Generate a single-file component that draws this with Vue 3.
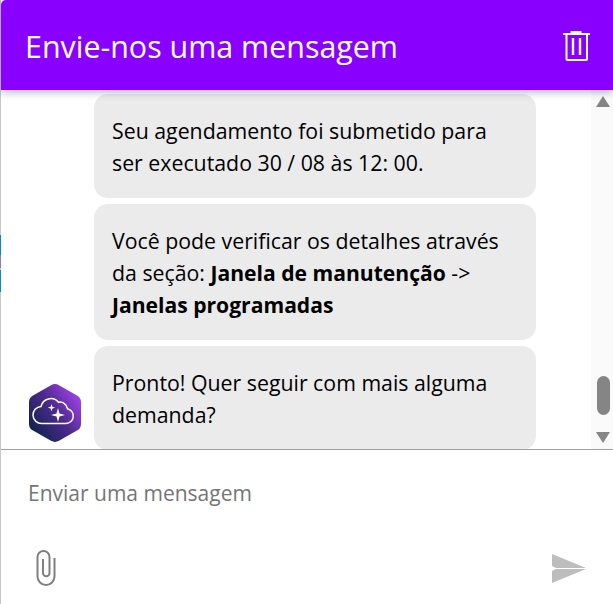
<script setup>
const messages = [
  { id: 1, parts: [{ t: 'Seu agendamento foi submetido para ser executado 30 / 08 às 12: 00.' }] },
  {
    id: 2,
    parts: [
      { t: 'Você pode verificar os detalhes através da seção: ' },
      { t: 'Janela de manutenção', b: true },
      { t: ' -> ' },
      { t: 'Janelas programadas', b: true }
    ]
  },
  { id: 3, parts: [{ t: 'Pronto! Quer seguir com mais alguma demanda?' }], avatar: true }
]
</script>

<template>
  <div class="page">
    <div class="edge"></div>
    <div class="chat">
      <header class="head">
        <h1>Envie-nos uma mensagem</h1>
        <button class="icon-btn trash" aria-label="Limpar">
          <svg width="28" height="30" viewBox="0 0 28 30" fill="none" stroke="#fff" stroke-width="2">
            <path d="M1 3h27M9.5 3V1h9v2" />
            <path d="M4.5 3v25a1 1 0 0 0 1 1h18.5a1 1 0 0 0 1-1V3" />
            <path d="M11 7v17M18 7v17" stroke-width="2.4" />
          </svg>
        </button>
      </header>

      <div class="body">
        <div class="list">
          <div v-for="m in messages" :key="m.id" class="row">
            <div class="avatar-slot">
              <svg v-if="m.avatar" width="52" height="58" viewBox="0 0 52 58">
                <defs>
                  <linearGradient id="hex" x1="0.05" y1="0.9" x2="0.95" y2="0.2">
                    <stop offset="0" stop-color="#0c2148" />
                    <stop offset="0.55" stop-color="#4c2a8c" />
                    <stop offset="1" stop-color="#a040e8" />
                  </linearGradient>
                </defs>
                <path
                  d="M22 1.2a8 8 0 0 1 8 0l18 10.2a7.5 7.5 0 0 1 4 6.6v22a7.5 7.5 0 0 1-4 6.6L30 56.8a8 8 0 0 1-8 0L4 46.6A7.5 7.5 0 0 1 0 40V18a7.5 7.5 0 0 1 4-6.6z"
                  fill="url(#hex)"
                />
                <path
                  d="M13 39.5H37a7.5 7.5 0 0 0 1.5-14.8a7.5 7.5 0 0 0-9-6.4a10 10 0 0 0-17.5 4.2a8.5 8.5 0 0 0 1 17z"
                  fill="none"
                  stroke="#fff"
                  stroke-width="1.5"
                />
                <path d="M29 24l1.5 5.5 5.5 1.5-5.5 1.5-1.5 5.5-1.5-5.5-5.5-1.5 5.5-1.5z" fill="#fff" />
                <path d="M22.5 20l.9 2.8 2.8.9-2.8.9-.9 2.8-.9-2.8-2.8-.9 2.8-.9z" fill="#fff" />
              </svg>
            </div>
            <div class="bubble">
              <template v-for="(p, i) in m.parts" :key="i">
                <b v-if="p.b">{{ p.t }}</b>
                <template v-else>{{ p.t }}</template>
              </template>
            </div>
          </div>
        </div>
        <div class="scrollbar">
          <span class="arrow up"></span>
          <span class="thumb"></span>
          <span class="arrow down"></span>
        </div>
      </div>

      <footer class="composer">
        <input class="field" type="text" placeholder="Enviar uma mensagem" />
        <div class="actions">
          <button class="icon-btn" aria-label="Anexar">
            <svg width="20" height="36" viewBox="0 0 20 36" fill="none" stroke="#808080" stroke-width="2">
              <path d="M18.5 8V26.5a8.5 8.5 0 0 1-17 0V7a6 6 0 0 1 12 0V23a3.25 3.25 0 0 1-6.5 0V9" />
            </svg>
          </button>
          <button class="icon-btn" aria-label="Enviar">
            <svg width="34" height="29" viewBox="0 0 34 29">
              <path d="M0 0l34 14H4L0 12zM0 29l34-14H4L0 17z" fill="#bdbdbd" />
            </svg>
          </button>
        </div>
      </footer>
    </div>
  </div>
</template>

<style>
html,
body {
  background: #fff;
}
</style>

<style scoped>
.page {
  display: flex;
  width: 613px;
  height: 604px;
  overflow: hidden;
  font-family: "Open Sans", "Noto Sans", sans-serif;
  color: #000;
}

.edge {
  flex: 0 0 1px;
  background: linear-gradient(
    #c8c8c8 235px,
    #0a84d0 235px,
    #0a84d0 255px,
    #8a7cc0 255px,
    #8a7cc0 268px,
    #c8c8c8 268px,
    #c8c8c8 270px,
    #0a84d0 270px,
    #0a84d0 292px,
    #c8c8c8 292px
  );
}

.chat {
  flex: 1;
  display: flex;
  flex-direction: column;
  min-width: 0;
}

.head {
  position: relative;
  z-index: 1;
  flex: 0 0 90px;
  display: flex;
  align-items: center;
  justify-content: space-between;
  padding: 0 23px 0 24px;
  background: #8a00ff;
  border-top-left-radius: 5px;
  box-shadow: 0 2px 8px rgba(0, 0, 0, 0.3);
}

.head h1 {
  margin: 2px 0 0;
  font-size: 30.4px;
  font-weight: 400;
  color: #fff;
}

.icon-btn {
  display: flex;
  padding: 0;
  border: 0;
  background: none;
}

.trash {
  margin-top: 2px;
}

.body {
  flex: 0 0 359px;
  display: flex;
  overflow: hidden;
}

.list {
  flex: 1;
  display: flex;
  flex-direction: column;
  gap: 6px;
  padding-top: 4px;
  min-width: 0;
}

.row {
  display: flex;
  align-items: flex-end;
  gap: 13px;
  padding-left: 28px;
}

.avatar-slot {
  flex: 0 0 52px;
  display: flex;
  padding-bottom: 8px;
}

.bubble {
  width: 442px;
  box-sizing: border-box;
  padding: 21px 18px 19px;
  background: #ebebeb;
  border-radius: 14px;
  font-size: 21.3px;
  line-height: 32px;
}

.bubble b {
  font-size: 21.1px;
}

.scrollbar {
  flex: 0 0 22px;
  display: flex;
  flex-direction: column;
  align-items: center;
  box-sizing: border-box;
  padding: 6px 0 6px 2px;
  background: #fafafa;
}

.arrow {
  width: 0;
  height: 0;
  border-left: 7.5px solid transparent;
  border-right: 7.5px solid transparent;
}

.arrow.up {
  border-bottom: 11px solid #858585;
}

.arrow.down {
  border-top: 11px solid #858585;
}

.thumb {
  width: 13px;
  height: 39px;
  margin-top: auto;
  margin-bottom: 17px;
  background: #858585;
  border-radius: 7px;
}

.composer {
  flex: 1;
  display: flex;
  flex-direction: column;
  border-top: 1px solid #a0a0a0;
}

.field {
  height: 86px;
  box-sizing: border-box;
  padding: 0 27px;
  border: 0;
  outline: 0;
  background: transparent;
  font: inherit;
  font-size: 21px;
}

.field::placeholder {
  color: #757575;
  opacity: 1;
}

.actions {
  flex: 1;
  display: flex;
  align-items: center;
  justify-content: space-between;
  padding: 0 27px 4px 35px;
}
</style>
